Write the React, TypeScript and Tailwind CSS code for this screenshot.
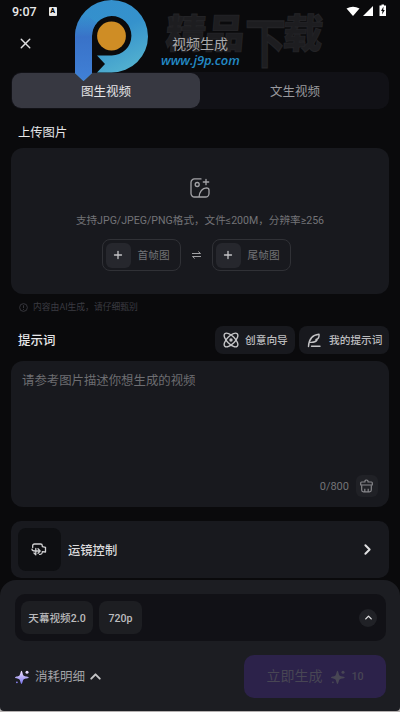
import { ChevronRight, ChevronUp, Plus, X } from "lucide-react";

function BrandLogo() {
  return (
    <svg width="76" height="82" viewBox="74 0 76 82" fill="none">
      <defs>
        <linearGradient id="bowl" x1="84" y1="4" x2="116" y2="72" gradientUnits="userSpaceOnUse">
          <stop stopColor="#348fcd" />
          <stop offset="0.5" stopColor="#3592cc" />
          <stop offset="1" stopColor="#50aecf" />
        </linearGradient>
        <linearGradient id="stem" x1="83" y1="14" x2="83" y2="80" gradientUnits="userSpaceOnUse">
          <stop stopColor="#3b78cc" stopOpacity="0" />
          <stop offset="0.35" stopColor="#3972c8" />
          <stop offset="1" stopColor="#4080d6" />
        </linearGradient>
      </defs>
      <path
        d="M75 73V36.500A36.500 36.500 0 0 1 148 36.500A36.500 36 0 0 1 111.500 72.500H97L105 64L97 55.500H111.500A19.700 19.700 0 1 0 92 36V73L83.500 81Z"
        fill="url(#bowl)"
      />
      <path d="M75 73V36.500Q75 22 84 13L97 23Q92 28 92 36V73L83.500 81Z" fill="url(#stem)" />
      <circle cx="111.500" cy="36" r="14.400" fill="#cf8d25" />
    </svg>
  );
}

function Watermark() {
  return (
    <div className="pointer-events-none absolute inset-0">
      <div className="absolute left-[74px] top-0">
        <BrandLogo />
      </div>
      <svg className="absolute left-[156px] top-0" width="180" height="90">
        <g
          fill="#1d1d20"
          stroke="#232326"
          strokeWidth="1"
          fontFamily="'Noto Sans CJK SC', sans-serif"
          fontWeight="900"
          fontSize="40"
        >
          <text x="13" y="48" transform="skewX(-5)">精</text>
          <text x="52" y="48" transform="skewX(-5)">品</text>
          <text transform="translate(89 62.500) scale(1.08 1.4)" fontWeight="700" fontSize="38">下</text>
          <text x="130" y="48" transform="skewX(-5)">载</text>
        </g>
      </svg>
      <div className="absolute left-[161px] top-[51px] font-['Open_Sans',sans-serif] text-[13px] font-semibold italic leading-[18px] tracking-[-0.1px] text-[#2389c4]">
        www.j9p.com
      </div>
    </div>
  );
}

function StatusBar() {
  return (
    <div className="flex h-6 items-center px-3">
      <span className="text-[12.5px] font-medium text-[#e8e8e8]">9:07</span>
      <span className="ml-3 mb-0.5 flex h-[9px] w-2 items-center justify-center rounded-[1px] bg-[#e8e8e8] text-[7px] font-black leading-none text-black">
        A
      </span>
      <svg className="mb-[3px] ml-auto" width="42" height="14" viewBox="0 0 42 14" fill="#fff">
        <path d="M.5 4.500Q7 1 13.500 4.500L7 12Z" />
        <path d="M27 2V12H17Z" />
        <path d="M35.500.5H38V1.500H40V12H33.500V1.500H35.500Z" />
        <path d="M37.500 2.500L35 7H36.500L36 10.500L38.800 6H37.300Z" fill="#0a0a0c" />
      </svg>
    </div>
  );
}

function ImageAddIcon() {
  return (
    <svg width="20" height="20" viewBox="0 0 20 20" fill="none" stroke="#a3a3a7" strokeWidth="1.3" strokeLinecap="round">
      <path d="M11 .9H4.500A3.500 3.500 0 0 0 1 4.400V15.500A3.500 3.500 0 0 0 4.500 19H15.500A3.500 3.500 0 0 0 19 15.500V12Q19 10 16.500 9.900Q10 10.500 9 19" />
      <circle cx="7.200" cy="6.500" r="2" />
      <path d="M16 1.300V6.700M13.300 4H18.700" />
    </svg>
  );
}

function AtomIcon() {
  return (
    <svg width="16" height="16" viewBox="0 0 16 16" fill="none" stroke="#c4c4c6" strokeWidth="1.4">
      <ellipse cx="8" cy="8" rx="8.800" ry="4" transform="rotate(45 8 8)" />
      <ellipse cx="8" cy="8" rx="8.800" ry="4" transform="rotate(-45 8 8)" />
      <circle cx="8" cy="8" r="1" fill="#c4c4c6" />
    </svg>
  );
}

function QuillIcon() {
  return (
    <svg width="15" height="15" viewBox="0 0 15 15" fill="none" stroke="#c4c4c6" strokeWidth="1.400" strokeLinecap="round" strokeLinejoin="round">
      <path d="M1.500 13.500C1.800 7 5 1.800 12 1.200C12.500 4.500 11.500 6 9 6.500L10 7C8.500 9.300 6.500 9.500 3 9.300" />
      <path d="M4.500 13.300H13" />
    </svg>
  );
}

function BroomIcon() {
  return (
    <svg width="13" height="14" viewBox="0 0 13 14" fill="none" stroke="#87878b" strokeWidth="1.200" strokeLinejoin="round">
      <path d="M5 3V2Q5 1 6.500 1T8 2V3H11.500Q12.300 3 12.300 4V6H.7V4Q.7 3 1.500 3Z" />
      <path d="M1.700 6.200V11Q1.700 12.800 3.500 12.800H9.500Q11.300 12.800 11.300 11V6.200M4.800 12.600V9.700M8.200 12.600V9.700" />
    </svg>
  );
}

function CameraMoveIcon() {
  return (
    <svg width="16" height="13" viewBox="0 0 16 13" fill="none" stroke="#d0d0d2" strokeWidth="1.300" strokeLinecap="round" strokeLinejoin="round">
      <path d="M1.700 4.500V2.800Q1.700 1 3.500 1H9.500Q11.300 1 11.300 2.800V3.600L14.500 4.300V9L11.300 8.600V9.500Q11 11.300 9.200 11.300H8.500" />
      <path d="M1 6.200Q1 8 4 8H9M7 5.800L9.200 8L7 10.200M4.800 5.500V11.500M3 10L4.800 11.800" />
    </svg>
  );
}

function SparkleIcon({ id, from, to }: { id: string; from: string; to: string }) {
  return (
    <svg width="14" height="14" viewBox="0 0 14 14" fill={`url(#${id})`}>
      <defs>
        <linearGradient id={id} x1="0" y1="1" x2="0" y2="14" gradientUnits="userSpaceOnUse">
          <stop stopColor={from} />
          <stop offset="1" stopColor={to} />
        </linearGradient>
      </defs>
      <path d="M6.500 .8C7.400 .8 7.600 5 8.800 5.800S13.800 6.600 13.800 7.500S10 8.400 8.800 9.300S7.400 14 6.500 14S5.400 10.200 4.200 9.300S0 8.400 0 7.500S3 6.700 4.200 5.800S5.600 .8 6.500 .8Z" />
      <circle cx="12" cy="2.200" r="1.500" />
      <circle cx="1.900" cy="12.300" r=".9" />
    </svg>
  );
}

function FrameButton({ label }: { label: string }) {
  return (
    <button className="flex h-8 w-[79px] items-center rounded-lg border border-[#303136] pl-[3px]">
      <span className="flex h-[25px] w-[25px] items-center justify-center rounded-md bg-[#26272d]">
        <Plus size={12} color="#c4c4c6" strokeWidth={2.6} />
      </span>
      <span className="ml-[7px] pt-0.5 text-[10.7px] text-[#737377]">{label}</span>
    </button>
  );
}

export default function App() {
  return (
    <div className="relative flex h-[712px] w-[400px] flex-col overflow-hidden bg-[#0a0a0c] font-[Roboto,'Noto_Sans_CJK_SC',sans-serif] text-[#e0e0e2]">
      <StatusBar />
      <header className="flex h-12 items-center px-[17px] pb-[10px]">
        <X size={17} color="#dedee0" strokeWidth={2} />
        <h1 className="relative z-10 flex-1 pr-[17px] pt-0.5 text-center text-[14px] text-[#a8a8aa]">视频生成</h1>
      </header>

      <div className="mx-[11px] flex h-[37px] rounded-[10px] bg-[#111116] p-px">
        <button className="w-[188px] rounded-[9px] bg-[#373841] pt-[3px] text-[12.5px] text-[#e6e6e8]">图生视频</button>
        <button className="flex-1 pl-0.5 pt-[3px] text-[12.5px] text-[#99999d]">文生视频</button>
      </div>

      <h2 className="ml-[18px] mt-[14px] h-[25px] text-[12.3px] leading-5 text-[#e8e8ea]">上传图片</h2>

      <section className="mx-[11px] flex h-[146px] flex-col items-center rounded-xl bg-[#18191e] pt-[30px]">
        <ImageAddIcon />
        <p className="mt-[13px] whitespace-nowrap text-[10.6px] leading-5 text-[#737377]">
          支持JPG/JPEG/PNG格式，文件≤200M，分辨率≥256
        </p>
        <div className="mr-2 mt-2 flex items-center">
          <FrameButton label="首帧图" />
          <svg className="mx-[11px]" width="9" height="8" viewBox="0 0 9 8" fill="none" stroke="#a0a0a3">
            <path d="M0 2.500H8.500L6.300.5M9 5.500H.5L2.700 7.500" />
          </svg>
          <FrameButton label="尾帧图" />
        </div>
      </section>

      <div className="ml-[19px] mt-[3px] flex h-5 items-center gap-[5px] text-[8.800px] text-[#3b3b42]">
        <svg width="9" height="9" viewBox="0 0 10 10" fill="none" stroke="#3b3b42">
          <circle cx="5" cy="5" r="4.300" />
          <path d="M5 2.500V5.700M5 6.800V7.800" />
        </svg>
        <span className="pt-px">内容由AI生成，请仔细甄别</span>
      </div>

      <div className="mt-[9px] flex h-7 items-center pl-[18px] pr-[11px]">
        <h2 className="pt-[3px] text-[12.5px] font-medium text-[#e8e8ea]">提示词</h2>
        <button className="ml-auto flex h-7 w-20 items-center gap-[6px] rounded-lg bg-[#18191e] pl-2 text-[10.7px] font-medium text-[#bcbcbe]">
          <AtomIcon />
          <span className="pt-0.5">创意向导</span>
        </button>
        <button className="ml-1 flex h-7 w-[90px] items-center gap-[7px] rounded-lg bg-[#18191e] pl-2 text-[10.7px] font-medium text-[#bcbcbe]">
          <QuillIcon />
          <span className="pt-0.5">我的提示词</span>
        </button>
      </div>

      <section className="mx-[11px] mt-[7px] flex h-[146px] shrink-0 flex-col rounded-xl bg-[#18191e] px-[11px] pb-[10px] pt-[10px]">
        <p className="text-[12.4px] leading-5 text-[#6d6d71]">请参考图片描述你想生成的视频</p>
        <div className="mt-auto flex items-center justify-end gap-[7px]">
          <span className="pt-0.5 text-[11px] text-[#737377]">0/800</span>
          <button className="flex h-[22px] w-[22px] items-center justify-center rounded-md bg-[#202126] pr-0.5">
            <BroomIcon />
          </button>
        </div>
      </section>

      <section className="mx-[11px] mt-[14px] flex h-[57px] shrink-0 items-center rounded-[10px] bg-[#18191e] pl-[7px] pr-[13px]">
        <span className="flex h-[43px] w-[43px] items-center justify-center rounded-lg bg-[#0e0f12] pr-0.5">
          <CameraMoveIcon />
        </span>
        <span className="ml-[7px] pt-[3px] text-[12.3px] font-medium text-[#dadadc]">运镜控制</span>
        <ChevronRight className="ml-auto" size={17} color="#e0e0e2" strokeWidth={2.8} />
      </section>

      <footer className="mt-[2px] h-[132px] shrink-0 bg-[linear-gradient(#0a0a0c_50%,#b4b0b0_50%)] pb-px">
        <div className="flex h-[131px] flex-col rounded-b rounded-t-2xl bg-[#1c1d22] px-[15px] pt-[14px]">
          <div className="-mr-px flex h-[47px] items-center gap-[6px] rounded-[10px] bg-[#111116] pl-[6px] pr-[9px]">
            <span className="flex h-[33px] w-[72px] items-center justify-center rounded-lg bg-[#1d1e22] pt-0.5 text-[10.6px] font-medium text-[#bcbcbe]">
              天幕视频2.0
            </span>
            <span className="flex h-[33px] w-[43px] items-center justify-center rounded-lg bg-[#1d1e22] pt-0.5 text-[10.6px] font-medium text-[#bcbcbe]">
              720p
            </span>
            <span className="ml-auto flex h-[18px] w-[18px] items-center justify-center rounded-full bg-[#202126]">
              <ChevronUp size={11} color="#e0e0e2" strokeWidth={3} />
            </span>
          </div>
          <div className="-mr-px mt-[14px] flex h-[43px] items-center">
            <SparkleIcon id="cost" from="#f2e4ff" to="#7772ec" />
            <span className="ml-[6px] pt-px text-[12.5px] text-[#a3a3a7]">消耗明细</span>
            <ChevronUp className="ml-0.5" size={17} color="#c4c4c6" strokeWidth={2.8} />
            <button className="ml-auto flex h-[43px] w-[142px] items-center justify-center rounded-[10px] bg-[#2c224a] text-[14px] text-[#484654]">
              立即生成
              <span className="ml-[9px] mr-[6px]">
                <SparkleIcon id="generate" from="#484654" to="#484654" />
              </span>
              <span className="pt-px text-[10.7px] font-medium">10</span>
            </button>
          </div>
        </div>
      </footer>

      <Watermark />
    </div>
  );
}
